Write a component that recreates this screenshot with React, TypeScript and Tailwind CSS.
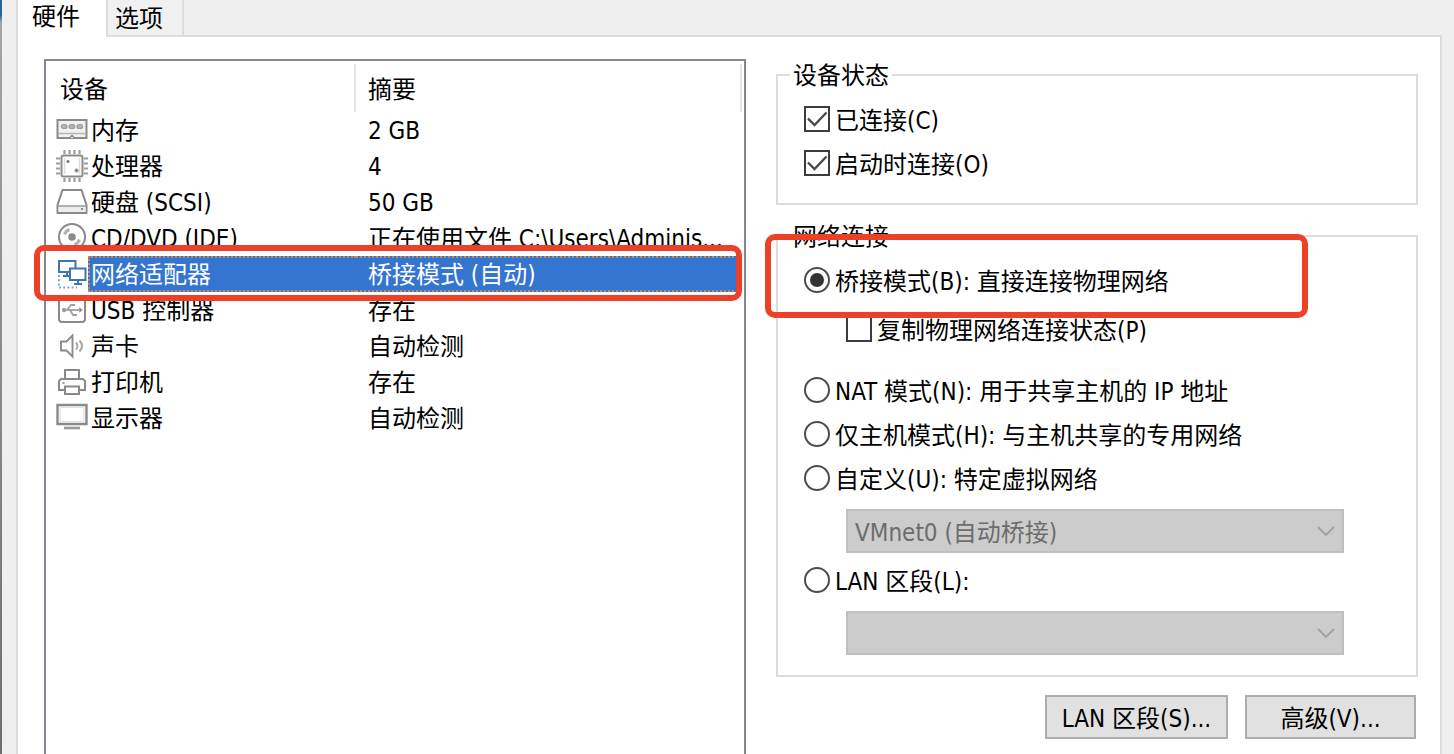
import { useState } from "react";
import type { ReactNode } from "react";

type Device = { name: string; summary: string; icon: ReactNode };

function IconFrame({ children }: { children: ReactNode }) {
  return (
    <svg
      viewBox="0 0 32 32"
      fill="none"
      stroke="#8a8a8a"
      strokeWidth="2"
      className="block size-8 shrink-0"
      aria-hidden="true"
    >
      {children}
    </svg>
  );
}

const memoryIcon = (
  <IconFrame>
    <path d="M1.500 6h29v18h-29z" fill="#f1f1f3" />
    <path d="M2 19.500h28" stroke="#b5b5b8" strokeWidth="1.500" />
    <g fill="#b5b5b5" stroke="#9a9a9a" strokeWidth="1.200">
      <rect x="5.500" y="10.500" width="5.500" height="4" rx="2" />
      <rect x="13.200" y="10.500" width="5.500" height="4" rx="2" />
      <rect x="21" y="10.500" width="5.500" height="4" rx="2" />
    </g>
    <path d="M13.500 24l2.500-2.500 2.500 2.500" fill="#fff" strokeWidth="1.500" />
  </IconFrame>
);

const cpuIcon = (
  <IconFrame>
    <path
      d="M8.500 0v4M13.500 0v4M18.500 0v4M23.500 0v4M8.500 28v4M13.500 28v4M18.500 28v4M23.500 28v4M0 8.500h4M0 13.500h4M0 18.500h4M0 23.500h4M28 8.500h4M28 13.500h4M28 18.500h4M28 23.500h4"
      stroke="#9c9c9c"
      strokeWidth="2.200"
    />
    <rect x="5.500" y="5.500" width="21" height="21" rx="2" fill="#fff" />
    <path d="M8.500 8v16M23.500 8v16" stroke="#dcdce0" strokeWidth="1.500" />
    <path d="M10.500 11.500h3M12 10v3M18.500 20.500h4M20.500 18.500v4" stroke="#858585" strokeWidth="1.800" />
  </IconFrame>
);

const diskIcon = (
  <IconFrame>
    <path d="M6.500 4h19l5 15v8h-29v-8z" fill="#fff" />
    <path d="M2.500 20h27v6h-27z" fill="#ececef" stroke="none" />
    <path d="M2 20h28" strokeWidth="1.600" stroke="#a0a0a0" />
    <path d="M25 23h2" stroke="#888" />
  </IconFrame>
);

const discIcon = (
  <IconFrame>
    <circle cx="16" cy="15" r="13" />
    <circle cx="16" cy="15" r="3" fill="#8a8a8a" strokeWidth="1.500" />
    <path d="M8.500 12.500a8 8 0 0 1 5-5M23.500 17.500a8 8 0 0 1-5 5" strokeWidth="3" stroke="#b0b0b0" />
  </IconFrame>
);

const networkIcon = (
  <IconFrame>
    <g stroke="#3d76b0">
      <path d="M3 3h16.500v11H3z" fill="#fff" />
      <path d="M11 14v3.500M7 18h6" />
      <path d="M14 10.500h15.500V22H14z" fill="#fff" />
      <path d="M22 22v3M18 26h8" />
    </g>
    <path d="M3 17v12M3 29.500h18" stroke="#72a9de" strokeDasharray="2 2.200" />
  </IconFrame>
);

const usbIcon = (
  <IconFrame>
    <rect x="3" y="3" width="26" height="25" rx="3" />
    <g stroke="#a0a0a0" strokeWidth="1.800">
      <path d="M7 16h17" />
      <path d="M11 16l4-5h4M14 16l3 5h4" />
      <circle cx="8" cy="16" r="1.300" fill="#888" />
      <path d="M23.500 14l3 2-3 2z" fill="#888" strokeWidth="1" />
    </g>
  </IconFrame>
);

const soundIcon = (
  <IconFrame>
    <path d="M5 11.500h5.500l6-6v21l-6-6H5z" strokeWidth="1.900" />
    <path d="M20 12.500c1.800 2 1.800 5 0 7M23.500 10.500c3.200 3.500 3.200 7.500 0 11" stroke="#a5a5a5" />
  </IconFrame>
);

const printerIcon = (
  <IconFrame>
    <path d="M9 13V4h14v9" />
    <path d="M9 24H3V15l2-2h22l2 2v9h-6" />
    <path d="M9 20.500h14V28H9z" />
    <path d="M6.500 17h2" strokeWidth="1.800" />
  </IconFrame>
);

const displayIcon = (
  <IconFrame>
    <path d="M1.500 3h29v19h-29z" fill="#fff" strokeWidth="2.400" />
    <path d="M4 5.500h24v14H4z" stroke="#e0e2ec" strokeWidth="1.200" />
    <path d="M8 26h16" strokeWidth="2.600" stroke="#999" />
  </IconFrame>
);

const devices: Device[] = [
  { name: "内存", summary: "2 GB", icon: memoryIcon },
  { name: "处理器", summary: "4", icon: cpuIcon },
  { name: "硬盘 (SCSI)", summary: "50 GB", icon: diskIcon },
  { name: "CD/DVD (IDE)", summary: "正在使用文件 C:\\Users\\Adminis...", icon: discIcon },
  { name: "网络适配器", summary: "桥接模式 (自动)", icon: networkIcon },
  { name: "USB 控制器", summary: "存在", icon: usbIcon },
  { name: "声卡", summary: "自动检测", icon: soundIcon },
  { name: "打印机", summary: "存在", icon: printerIcon },
  { name: "显示器", summary: "自动检测", icon: displayIcon },
];

const selectedDevice = 4;

function DeviceTable() {
  return (
    <div className="border-2 border-b-0 border-[#828790]">
      <table className="w-full table-fixed border-collapse text-left">
        <thead>
          <tr className="h-[51px]">
            <th className="w-[310px] p-0 pt-[3px] font-normal">
              <div className="border-r-2 border-[#e5e5e5] pt-1 pl-[14px] leading-[44px]">设备</div>
            </th>
            <th className="p-0 pt-[3px] pr-[2px] font-normal">
              <div className="border-r-2 border-[#e5e5e5] pt-1 pl-3 leading-[44px]">摘要</div>
            </th>
          </tr>
        </thead>
        <tbody>
          {devices.map((device, i) => {
            const selected = i === selectedDevice;
            return (
              <tr key={device.name} className={selected ? "relative z-10 h-9" : "h-9"}>
                <td className="p-0 pl-[10px]">
                  <div className="flex items-center">
                    {device.icon}
                    <span
                      className={
                        selected
                          ? "flex-1 border-y-2 border-l-2 border-dotted border-[#c98a4e] bg-[#3375d0] pt-[3px] pl-px leading-[29px] text-white"
                          : "flex-1 pt-[3px] pl-[3px] leading-[33px]"
                      }
                    >
                      {device.name}
                    </span>
                  </div>
                </td>
                <td className="p-0 pr-[2px]">
                  <div
                    className={
                      selected
                        ? "border-y-2 border-dotted border-[#c98a4e] bg-[#3375d0] pt-[3px] pl-3 leading-[29px] text-white"
                        : "overflow-hidden pt-[3px] pl-3 leading-[33px] whitespace-nowrap"
                    }
                  >
                    {device.summary}
                  </div>
                  {selected && (
                    <div className="pointer-events-none absolute -top-[11px] right-[2px] -bottom-[9px] -left-3 rounded-[10px] border-[6px] border-[#ec4027]" />
                  )}
                </td>
              </tr>
            );
          })}
        </tbody>
      </table>
    </div>
  );
}

function Check({ label, defaultChecked = false }: { label: string; defaultChecked?: boolean }) {
  return (
    <label className="flex h-11 items-center gap-[5px]">
      <span className="grid shrink-0">
        <input
          type="checkbox"
          defaultChecked={defaultChecked}
          className="peer col-start-1 row-start-1 size-[26px] appearance-none border-2 border-[#3c3c3c] bg-white"
        />
        <svg
          viewBox="0 0 26 26"
          fill="none"
          stroke="#4a4a4a"
          strokeWidth="2.4"
          className="pointer-events-none invisible col-start-1 row-start-1 size-[26px] peer-checked:visible"
          aria-hidden="true"
        >
          <path d="M4 12.500l6.500 6.500L22.500 6.500" />
        </svg>
      </span>
      <span className="pt-[3px]">{label}</span>
    </label>
  );
}

function Radio({
  label,
  value,
  current,
  onSelect,
}: {
  label: string;
  value: string;
  current: string;
  onSelect: (value: string) => void;
}) {
  return (
    <label className="flex h-11 items-center gap-[5px]">
      <input
        type="radio"
        name="connection"
        value={value}
        checked={current === value}
        onChange={() => onSelect(value)}
        className="grid size-[26px] shrink-0 appearance-none place-content-center rounded-full border-2 border-[#4d4d4d] bg-white before:size-[14px] before:rounded-full checked:before:bg-[#333333]"
      />
      <span className="pt-[3px]">{label}</span>
    </label>
  );
}

function DisabledSelect({ label, text }: { label: string; text: string }) {
  return (
    <div className="mt-[9px] mr-[72px] ml-[42px] grid">
      <select
        disabled
        aria-label={label}
        className="col-start-1 row-start-1 h-11 w-full appearance-none border-2 border-[#bfbfbf] bg-[#cccccc] pt-[3px] pl-[7px] text-[#6d6d6d] opacity-100"
      >
        <option>{text}</option>
      </select>
      <svg
        viewBox="0 0 18 10"
        fill="none"
        stroke="#a3a3a3"
        strokeWidth="2"
        className="pointer-events-none col-start-1 row-start-1 mr-[9px] h-[10px] w-[18px] self-center justify-self-end"
        aria-hidden="true"
      >
        <path d="M1 1l8 8 8-8" />
      </svg>
    </div>
  );
}

const groupClass = "min-w-0 border-2 border-[#dcdcdc] pl-[26px]";
const legendClass = "-ml-[14px] px-[3px] pt-[3px] leading-[29px]";
const buttonClass = "h-11 border-2 border-[#adadad] bg-[#e1e1e1] pt-[3px]";

export default function App() {
  const [mode, setMode] = useState("bridged");

  return (
    <div className="flex min-h-screen bg-[#efefef] font-['DejaVu_Sans_Condensed','Noto_Sans_CJK_SC',sans-serif] text-[24px] text-black">
      <div className="w-[2px] bg-linear-to-b from-[#24679c] from-2% via-[#a5a5a5] via-3% to-[#6e6e6e]" />
      <div className="mr-3 ml-[14px] flex min-w-0 flex-1 flex-col">
        <div role="tablist" className="flex h-[37px] items-stretch">
          <button
            role="tab"
            aria-selected="true"
            className="w-[90px] border-l-2 border-[#dcdcdc] bg-white pr-3 pb-1 leading-8"
          >
            硬件
          </button>
          <button
            role="tab"
            aria-selected="false"
            className="w-[78px] border-x-2 border-b-2 border-[#dcdcdc] bg-[#f0f0f0] pt-[3px] pr-3 leading-8"
          >
            选项
          </button>
          <div className="flex-1 border-b-2 border-[#dcdcdc]" />
        </div>

        <main className="grid flex-1 grid-cols-[702fr_642fr] gap-[30px] border-x-2 border-[#dcdcdc] bg-white pt-[22px] pr-[22px] pl-[26px]">
          <DeviceTable />

          <div className="flex min-w-0 flex-col pb-[14px]">
            <fieldset className={`${groupClass} pb-[18px]`}>
              <legend className={legendClass}>设备状态</legend>
              <div className="pt-[6px]">
                <Check label="已连接(C)" defaultChecked />
                <Check label="启动时连接(O)" defaultChecked />
              </div>
            </fieldset>

            <fieldset className={`${groupClass} mt-[15px] pb-5`}>
              <legend className={legendClass}>网络连接</legend>
              <div className="relative pt-[6px]">
                <Radio label="桥接模式(B): 直接连接物理网络" value="bridged" current={mode} onSelect={setMode} />
                <div className="pointer-events-none absolute -top-[18px] right-[108px] -bottom-4 -left-[39px] z-10 rounded-[10px] border-[6px] border-[#ec4027]" />
              </div>
              <div className="mt-[5px] pl-[42px]">
                <Check label="复制物理网络连接状态(P)" />
              </div>
              <div className="mt-[17px]">
                <Radio label="NAT 模式(N): 用于共享主机的 IP 地址" value="nat" current={mode} onSelect={setMode} />
                <Radio label="仅主机模式(H): 与主机共享的专用网络" value="host" current={mode} onSelect={setMode} />
                <Radio label="自定义(U): 特定虚拟网络" value="custom" current={mode} onSelect={setMode} />
              </div>
              <DisabledSelect label="特定虚拟网络" text="VMnet0 (自动桥接)" />
              <div className="mt-[5px]">
                <Radio label="LAN 区段(L):" value="lan" current={mode} onSelect={setMode} />
              </div>
              <DisabledSelect label="LAN 区段" text="" />
            </fieldset>

            <div className="mt-[18px] flex justify-end gap-[17px] pr-[2px]">
              <button className={`${buttonClass} w-[183px]`}>LAN 区段(S)...</button>
              <button className={`${buttonClass} w-[171px]`}>高级(V)...</button>
            </div>
          </div>
        </main>
      </div>
    </div>
  );
}
